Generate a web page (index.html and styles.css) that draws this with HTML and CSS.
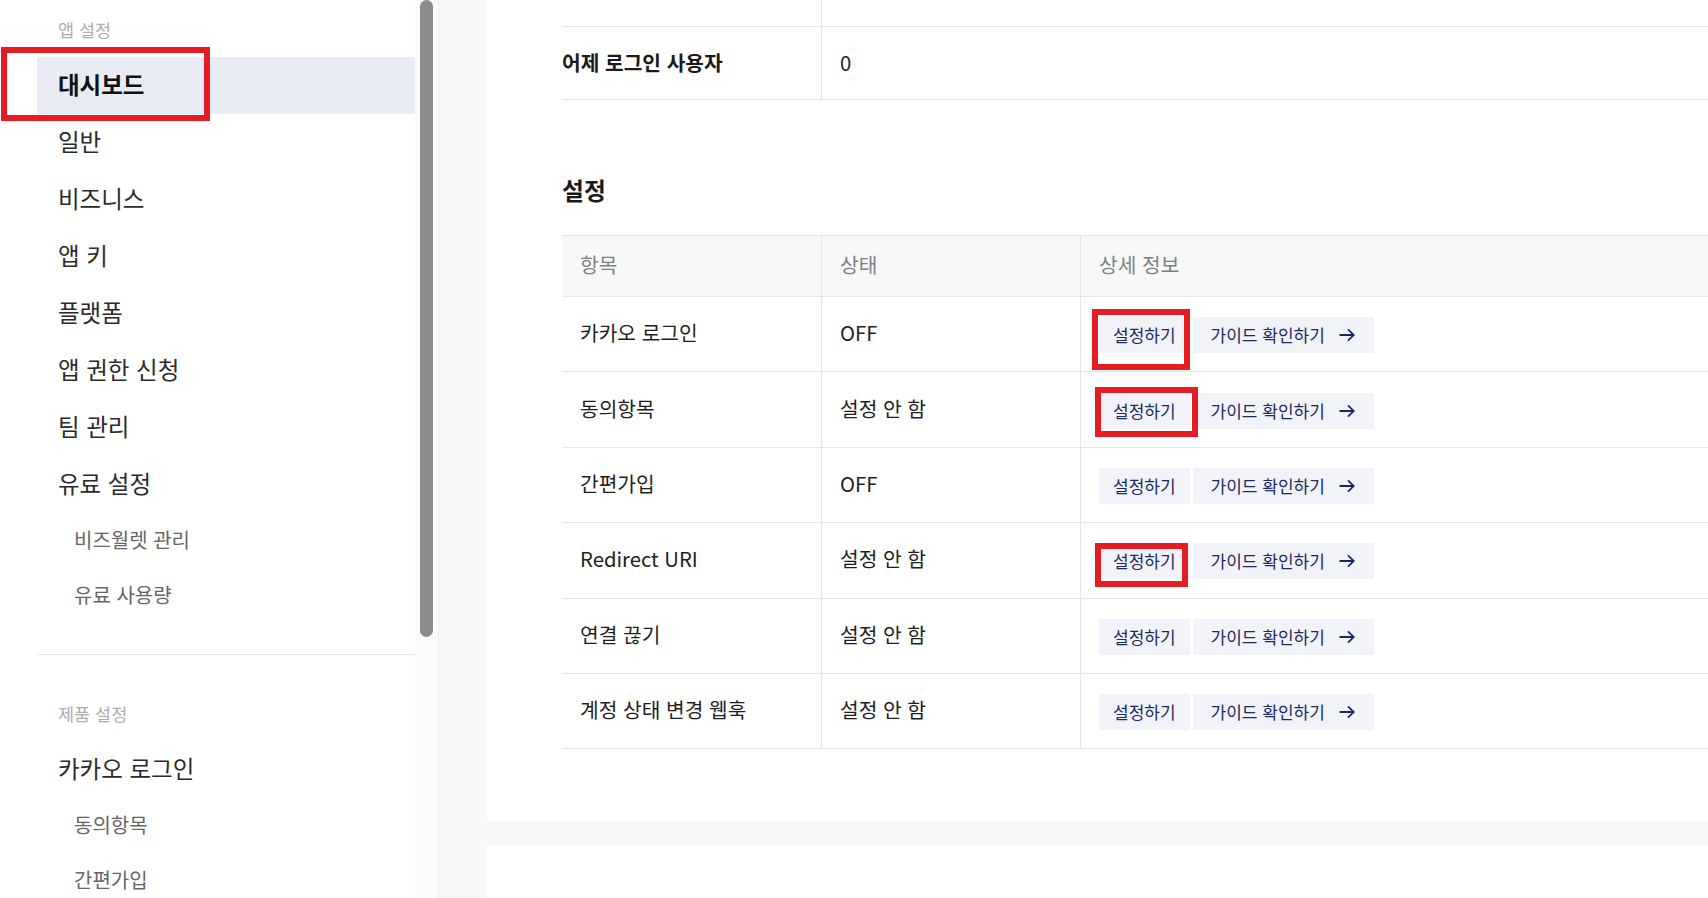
FILE: index.html
```html
<!DOCTYPE html>
<html lang="ko">
<head>
    <meta charset="UTF-8">
    <meta name="viewport" content="width=device-width, initial-scale=1.0">
    <title>대시보드 - 앱 설정</title>
    <link rel="stylesheet" href="styles.css">
</head>
<body>
    <div class="layout">
        <aside class="sidebar">
            <nav class="nav">
                <div class="nav-label">앱 설정</div>
                <ul class="nav-list">
                    <li class="nav-item active">대시보드</li>
                    <li class="nav-item">일반</li>
                    <li class="nav-item">비즈니스</li>
                    <li class="nav-item">앱 키</li>
                    <li class="nav-item">플랫폼</li>
                    <li class="nav-item">앱 권한 신청</li>
                    <li class="nav-item">팀 관리</li>
                    <li class="nav-item">유료 설정</li>
                    <li class="nav-sub">비즈월렛 관리</li>
                    <li class="nav-sub">유료 사용량</li>
                </ul>
                <hr class="nav-divider">
                <div class="nav-label second">제품 설정</div>
                <ul class="nav-list">
                    <li class="nav-item">카카오 로그인</li>
                    <li class="nav-sub">동의항목</li>
                    <li class="nav-sub">간편가입</li>
                </ul>
            </nav>
            <div class="scroll-track">
                <div class="scroll-thumb"></div>
            </div>
            <div class="mark mark-nav"></div>
        </aside>

        <main class="main">
            <section class="card">
                <div class="info-table">
                    <div class="info-row cut">
                        <div class="info-key"></div>
                        <div class="info-val"></div>
                    </div>
                    <div class="info-row">
                        <div class="info-key">어제 로그인 사용자</div>
                        <div class="info-val">0</div>
                    </div>
                </div>

                <h2 class="section-title">설정</h2>

                <div class="settings-table">
                    <div class="set-row head">
                        <div class="set-cell">항목</div>
                        <div class="set-cell">상태</div>
                        <div class="set-cell">상세 정보</div>
                    </div>
                    <div class="set-row">
                        <div class="set-cell">카카오 로그인</div>
                        <div class="set-cell">OFF</div>
                        <div class="set-cell actions">
                            <span class="mark-wrap mark-a"><button class="btn">설정하기</button></span>
                            <button class="btn guide">가이드 확인하기 <svg class="arrow" viewBox="0 0 16 14"><path d="M0.5 7H15M9 1.3L14.8 7L9 12.7"/></svg></button>
                        </div>
                    </div>
                    <div class="set-row">
                        <div class="set-cell">동의항목</div>
                        <div class="set-cell">설정 안 함</div>
                        <div class="set-cell actions">
                            <span class="mark-wrap mark-b"><button class="btn">설정하기</button></span>
                            <button class="btn guide">가이드 확인하기 <svg class="arrow" viewBox="0 0 16 14"><path d="M0.5 7H15M9 1.3L14.8 7L9 12.7"/></svg></button>
                        </div>
                    </div>
                    <div class="set-row">
                        <div class="set-cell">간편가입</div>
                        <div class="set-cell">OFF</div>
                        <div class="set-cell actions">
                            <button class="btn">설정하기</button>
                            <button class="btn guide">가이드 확인하기 <svg class="arrow" viewBox="0 0 16 14"><path d="M0.5 7H15M9 1.3L14.8 7L9 12.7"/></svg></button>
                        </div>
                    </div>
                    <div class="set-row">
                        <div class="set-cell">Redirect URI</div>
                        <div class="set-cell">설정 안 함</div>
                        <div class="set-cell actions">
                            <span class="mark-wrap mark-c"><button class="btn">설정하기</button></span>
                            <button class="btn guide">가이드 확인하기 <svg class="arrow" viewBox="0 0 16 14"><path d="M0.5 7H15M9 1.3L14.8 7L9 12.7"/></svg></button>
                        </div>
                    </div>
                    <div class="set-row">
                        <div class="set-cell">연결 끊기</div>
                        <div class="set-cell">설정 안 함</div>
                        <div class="set-cell actions">
                            <button class="btn">설정하기</button>
                            <button class="btn guide">가이드 확인하기 <svg class="arrow" viewBox="0 0 16 14"><path d="M0.5 7H15M9 1.3L14.8 7L9 12.7"/></svg></button>
                        </div>
                    </div>
                    <div class="set-row">
                        <div class="set-cell">계정 상태 변경 웹훅</div>
                        <div class="set-cell">설정 안 함</div>
                        <div class="set-cell actions">
                            <button class="btn">설정하기</button>
                            <button class="btn guide">가이드 확인하기 <svg class="arrow" viewBox="0 0 16 14"><path d="M0.5 7H15M9 1.3L14.8 7L9 12.7"/></svg></button>
                        </div>
                    </div>
                </div>
            </section>
            <section class="card next"></section>
        </main>
    </div>
</body>
</html>
```

FILE: styles.css
```css
* {
    box-sizing: border-box;
}
body {
    margin: 0;
    font-family: "Noto Sans CJK KR", "Noto Sans", sans-serif;
    color: #222;
    background: #fff;
}
.layout {
    display: flex;
    height: 100vh;
    overflow: hidden;
}

/* sidebar */
.sidebar {
    position: relative;
    display: flex;
    width: 439px;
    flex-shrink: 0;
    background: #fff;
    border-right: 1px solid #ececec;
}
.nav {
    width: 415px;
    padding-left: 37px;
}
.nav-label {
    font-size: 17.5px;
    line-height: 24px;
    color: #adadad;
    padding: 18px 0 15px 21px;
}
.nav-label.second {
    padding-top: 47px;
}
.nav-list {
    list-style: none;
    margin: 0;
    padding: 0;
}
.nav-item {
    height: 57px;
    line-height: 55px;
    font-size: 23.5px;
    color: #2b2b2b;
    padding-left: 21px;
}
.nav-item.active {
    background: #e9ecf4;
    color: #111;
    font-weight: 700;
}
.nav-sub {
    height: 55px;
    line-height: 54px;
    font-size: 20px;
    color: #666;
    padding-left: 37px;
}
.nav-divider {
    border: none;
    height: 1px;
    background: #e6e6e6;
    margin: 31px 0 0 0;
}
.scroll-track {
    position: relative;
    width: 23px;
    background: #fbfbfb;
}
.scroll-thumb {
    position: absolute;
    left: 5px;
    top: 0;
    width: 13px;
    height: 637px;
    border-radius: 7px;
    background: #8c8c8c;
}

/* main */
.main {
    flex: 1;
    background: #f7f8f8;
    padding-left: 48px;
    overflow: hidden;
}
.card {
    background: #fff;
    padding: 0 0 72px 75px;
}
.card.next {
    margin-top: 24px;
    height: 200px;
    padding: 0;
}
.info-row {
    display: grid;
    grid-template-columns: 260px 1fr;
    height: 73px;
    border-bottom: 1px solid #e5e5e5;
    font-size: 20.3px;
    line-height: 70px;
}
.info-row.cut {
    height: 27px;
}
.info-key {
    font-weight: 700;
    color: #1a1a1a;
    border-right: 1px solid #e5e5e5;
}
.info-val {
    padding-left: 18px;
}
.section-title {
    margin: 75px 0 30px 0;
    font-size: 23.8px;
    line-height: 30px;
    font-weight: 700;
    color: #1a1a1a;
}
.settings-table {
    border-top: 1px solid #e5e5e5;
}
.set-row {
    display: grid;
    grid-template-columns: 260px 259px 1fr;
    height: 75.4px;
    border-bottom: 1px solid #e5e5e5;
    font-size: 20.3px;
    color: #1e1e1e;
}
.set-row.head {
    height: 61px;
    background: #f7f8f8;
    color: #808080;
}
.set-cell {
    display: flex;
    align-items: center;
    padding-left: 18px;
    padding-bottom: 4px;
    border-right: 1px solid #e5e5e5;
}
.set-cell:last-child {
    border-right: none;
}
.set-cell.actions {
    gap: 3px;
    padding-bottom: 0;
    padding-top: 2px;
}
.btn {
    display: inline-flex;
    align-items: center;
    height: 36px;
    padding: 0 14px;
    border: none;
    border-radius: 0;
    background: #f1f3f8;
    color: #1c2a63;
    font-family: inherit;
    font-size: 17px;
    line-height: 34px;
}
.btn.guide {
    padding: 0 19px 0 18px;
    gap: 14px;
}
.arrow {
    width: 16px;
    height: 14px;
    fill: none;
    stroke: #1c2a63;
    stroke-width: 1.8;
}

/* red annotation boxes */
.mark-wrap {
    position: relative;
    display: inline-flex;
}
.mark-wrap::after,
.mark {
    content: "";
    position: absolute;
    border: 6px solid #e41d24;
    pointer-events: none;
}
.mark-nav {
    left: 1px;
    top: 47px;
    width: 209px;
    height: 74px;
}
.mark-a::after {
    left: -7px;
    top: -8px;
    right: 0;
    bottom: -17px;
}
.mark-b::after {
    left: -4px;
    top: -6px;
    right: -8px;
    bottom: -8px;
}
.mark-c::after {
    left: -4px;
    top: 0;
    right: 2px;
    bottom: -8px;
}
```
